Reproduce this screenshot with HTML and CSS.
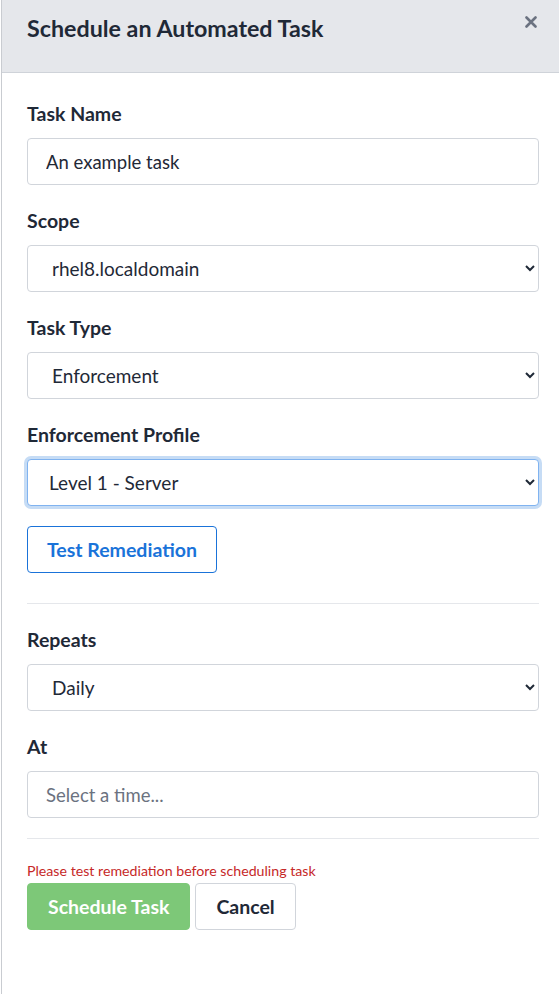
FILE: index.html
```html
<!DOCTYPE html>
<html lang="en">
<head>
<meta charset="utf-8">
<title>Schedule an Automated Task</title>
<link rel="stylesheet" href="styles.css">
</head>
<body>
<div class="modal">
  <div class="modal-header">
    <h1 class="modal-title">Schedule an Automated Task</h1>
    <button class="close" type="button" aria-label="Close">
      <svg width="12" height="12" viewBox="0 0 12 12"><path d="M1.5 1.5 L10.5 10.5 M10.5 1.5 L1.5 10.5" stroke="currentColor" stroke-width="2.6" stroke-linecap="round"/></svg>
    </button>
  </div>
  <div class="modal-body">
    <div class="group">
      <label class="label">Task Name</label>
      <input class="control" type="text" value="An example task">
    </div>
    <div class="group">
      <label class="label">Scope</label>
      <select class="control select"><option>rhel8.localdomain</option></select>
    </div>
    <div class="group">
      <label class="label">Task Type</label>
      <select class="control select"><option>Enforcement</option></select>
    </div>
    <div class="group last-before-btn">
      <label class="label">Enforcement Profile</label>
      <select class="control select focused"><option>Level 1 - Server</option></select>
    </div>
    <button class="btn btn-outline" type="button">Test Remediation</button>
    <hr class="divider first">
    <div class="group">
      <label class="label">Repeats</label>
      <select class="control select"><option>Daily</option></select>
    </div>
    <div class="group last">
      <label class="label">At</label>
      <input class="control" type="text" placeholder="Select a time...">
    </div>
    <hr class="divider">
    <p class="error">Please test remediation before scheduling task</p>
    <div class="actions">
      <button class="btn btn-success" type="button" disabled>Schedule Task</button>
      <button class="btn btn-light" type="button">Cancel</button>
    </div>
  </div>
</div>
</body>
</html>
```
FILE: styles.css
```css
* { box-sizing: border-box; }
html, body { margin: 0; padding: 0; background: #fff; }
body {
  font-family: Lato, "Open Sans", "Liberation Sans", sans-serif;
  color: #1f2937;
  font-size: 19px;
}
.modal {
  margin-left: 1px;
  border-left: 1px solid #c9ccd1;
  min-height: 100vh;
  background: #fff;
}
.modal-header {
  height: 73px;
  padding: 12px 20px 0 25px;
  background: #e5e7eb;
  border-bottom: 1px solid #cfd3d9;
  display: flex;
  justify-content: space-between;
  align-items: flex-start;
}
.modal-title {
  margin: 0;
  font-size: 23.25px;
  line-height: 33px;
  font-weight: 700;
  color: #1f2937;
}
.close {
  border: 0;
  background: none;
  padding: 0;
  margin: 4px 2px 0 0;
  color: #6b7280;
  width: 12px;
  height: 12px;
  display: flex;
}
.modal-body {
  padding: 27px 20px 0 25px;
}
.group { margin-bottom: 22px; }
.group.last-before-btn { margin-bottom: 20px; }
.group.last { margin-bottom: 20px; }
.label {
  display: block;
  font-weight: 700;
  font-size: 19.5px;
  line-height: 27px;
  margin-bottom: 11px;
  color: #1f2937;
}
.control {
  display: block;
  width: 100%;
  height: 47px;
  border: 1px solid #d1d5db;
  border-radius: 4px;
  background: #fff;
  font-family: inherit;
  font-size: 18.5px;
  color: #1f2937;
  padding: 0 18px;
  outline: none;
}
.control::placeholder { color: #6b7280; }
.select { padding: 0 20px; font-size: 19px; }
.focused {
  border-color: #80b3f0;
  box-shadow: 0 0 0 3px #c6dcf5;
  padding-left: 17px;
}
.btn {
  height: 47px;
  border-radius: 4px;
  font-family: inherit;
  font-size: 19.5px;
  font-weight: 700;
  padding: 0 20px;
  background: #fff;
  cursor: pointer;
}
.btn-outline {
  border: 1px solid #1a73d9;
  color: #1a73d9;
  padding: 0 19px;
}
.divider {
  border: 0;
  border-top: 1px solid #e5e7eb;
  margin: 0 0 22px;
}
.divider.first { margin-top: 30px; }
.error {
  margin: -1px 0 0;
  color: #c62828;
  font-size: 14.2px;
  line-height: 22px;
}
.actions {
  display: flex;
  gap: 5px;
  margin-top: 1px;
}
.btn-success {
  background: #7dc878;
  border: 1px solid #7dc878;
  color: #fff;
}
.btn-light {
  border: 1px solid #d1d5db;
  color: #1f2937;
}
```
